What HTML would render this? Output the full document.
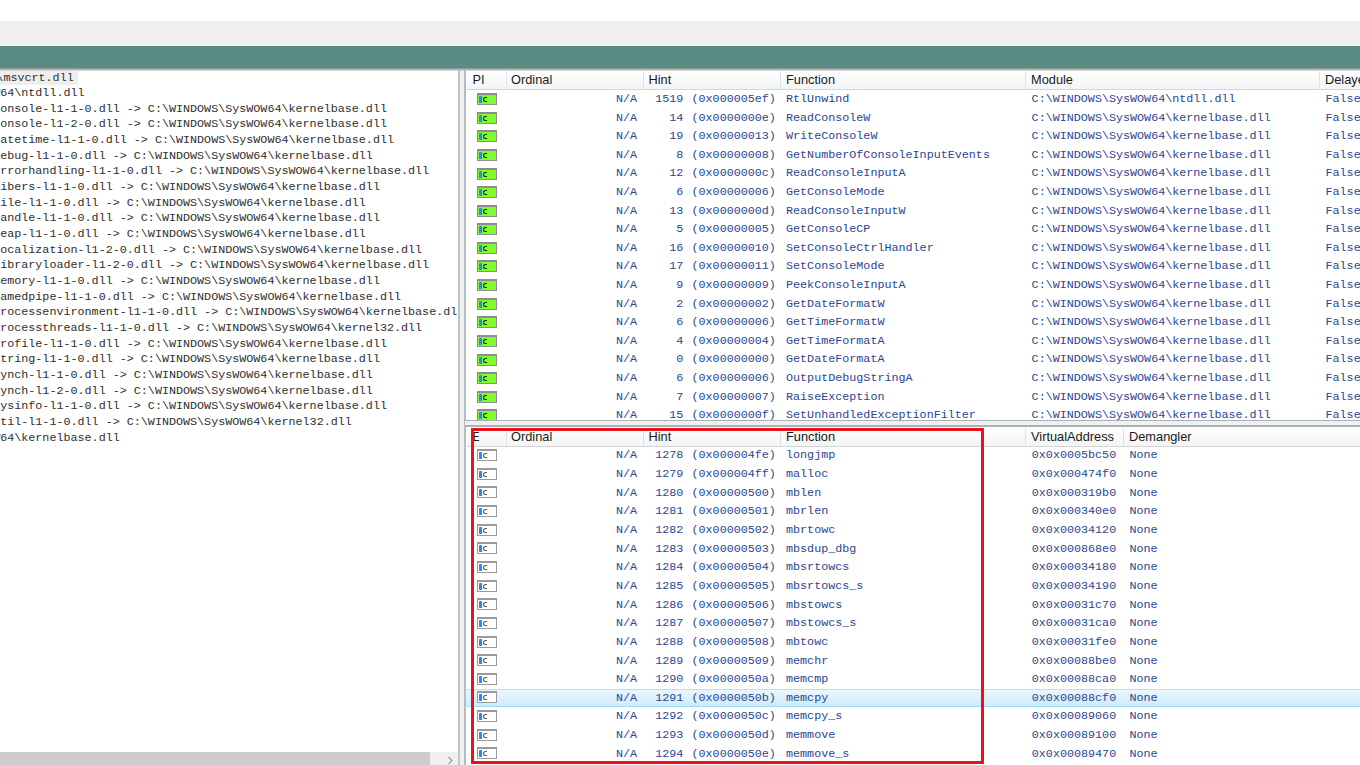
<!DOCTYPE html>
<html><head><meta charset="utf-8"><style>
html,body{margin:0;padding:0;width:1360px;height:765px;overflow:hidden;background:#fff;position:relative}
.a{position:absolute}
.m{font-family:"Liberation Mono",monospace;font-size:11.73px;white-space:pre;line-height:1;}
.s{font-family:"Liberation Sans",sans-serif;font-size:12.8px;white-space:pre;line-height:1;color:#1a1a1a}
.t{color:#2c4591}
.ic{position:absolute;width:20px;height:12px;background:#8d8a90}
.ic u{position:absolute;left:1px;top:2px;width:18px;height:9px;background:#80fb2c}
.ic.w{background:#9a9a9a}
.ic.w u{background:#fff}
.ic i{position:absolute;left:2px;top:3px;width:3px;height:7px;background:#2e86f6;border-radius:0.6px}
.ic b{position:absolute;left:6px;top:3.6px;width:3.4px;height:3.6px;border:1.25px solid #173300;border-right:none;border-radius:2.6px 0 0 2.6px}
.ic.w b{border-color:#5e5e5e}
.hd{position:absolute;height:19px;background:linear-gradient(#ffffff,#f3f4f5)}
.sep{position:absolute;width:1px;background:#dfe2e4}
</style></head><body>

<div class="a" style="left:0;top:21px;width:1360px;height:24px;background:#efefef"></div>
<div class="a" style="left:0;top:45px;width:1360px;height:1px;background:#f7f7f7"></div>
<div class="a" style="left:0;top:46px;width:1360px;height:22px;background:#5b8c84"></div>
<div class="a" style="left:0;top:70px;width:458px;height:695px;overflow:hidden;background:#fff">
<div class="a" style="left:0;top:1.3px;width:78px;height:14.2px;background:#eeeeee"></div>
<div class="a m" style="left:-137.26px;top:2.56px;color:#2e2e2e">C:\WINDOWS\SysWOW64\msvcrt.dll</div>
<div class="a m" style="left:-119.39px;top:17.84px;color:#2e2e2e">C:\WINDOWS\SysWOW64\ntdll.dll</div>
<div class="a m" style="left:-119.39px;top:33.52px;color:#2e2e2e">api-ms-win-core-console-l1-1-0.dll -&gt; C:\WINDOWS\SysWOW64\kernelbase.dll</div>
<div class="a m" style="left:-119.39px;top:49.20px;color:#2e2e2e">api-ms-win-core-console-l1-2-0.dll -&gt; C:\WINDOWS\SysWOW64\kernelbase.dll</div>
<div class="a m" style="left:-119.39px;top:64.88px;color:#2e2e2e">api-ms-win-core-datetime-l1-1-0.dll -&gt; C:\WINDOWS\SysWOW64\kernelbase.dll</div>
<div class="a m" style="left:-119.39px;top:80.56px;color:#2e2e2e">api-ms-win-core-debug-l1-1-0.dll -&gt; C:\WINDOWS\SysWOW64\kernelbase.dll</div>
<div class="a m" style="left:-119.39px;top:96.24px;color:#2e2e2e">api-ms-win-core-errorhandling-l1-1-0.dll -&gt; C:\WINDOWS\SysWOW64\kernelbase.dll</div>
<div class="a m" style="left:-119.39px;top:111.92px;color:#2e2e2e">api-ms-win-core-fibers-l1-1-0.dll -&gt; C:\WINDOWS\SysWOW64\kernelbase.dll</div>
<div class="a m" style="left:-119.39px;top:127.60px;color:#2e2e2e">api-ms-win-core-file-l1-1-0.dll -&gt; C:\WINDOWS\SysWOW64\kernelbase.dll</div>
<div class="a m" style="left:-119.39px;top:143.28px;color:#2e2e2e">api-ms-win-core-handle-l1-1-0.dll -&gt; C:\WINDOWS\SysWOW64\kernelbase.dll</div>
<div class="a m" style="left:-119.39px;top:158.96px;color:#2e2e2e">api-ms-win-core-heap-l1-1-0.dll -&gt; C:\WINDOWS\SysWOW64\kernelbase.dll</div>
<div class="a m" style="left:-119.39px;top:174.64px;color:#2e2e2e">api-ms-win-core-localization-l1-2-0.dll -&gt; C:\WINDOWS\SysWOW64\kernelbase.dll</div>
<div class="a m" style="left:-119.39px;top:190.32px;color:#2e2e2e">api-ms-win-core-libraryloader-l1-2-0.dll -&gt; C:\WINDOWS\SysWOW64\kernelbase.dll</div>
<div class="a m" style="left:-119.39px;top:206.00px;color:#2e2e2e">api-ms-win-core-memory-l1-1-0.dll -&gt; C:\WINDOWS\SysWOW64\kernelbase.dll</div>
<div class="a m" style="left:-119.39px;top:221.68px;color:#2e2e2e">api-ms-win-core-namedpipe-l1-1-0.dll -&gt; C:\WINDOWS\SysWOW64\kernelbase.dll</div>
<div class="a m" style="left:-119.39px;top:237.36px;color:#2e2e2e">api-ms-win-core-processenvironment-l1-1-0.dll -&gt; C:\WINDOWS\SysWOW64\kernelbase.dll</div>
<div class="a m" style="left:-119.39px;top:253.04px;color:#2e2e2e">api-ms-win-core-processthreads-l1-1-0.dll -&gt; C:\WINDOWS\SysWOW64\kernel32.dll</div>
<div class="a m" style="left:-119.39px;top:268.72px;color:#2e2e2e">api-ms-win-core-profile-l1-1-0.dll -&gt; C:\WINDOWS\SysWOW64\kernelbase.dll</div>
<div class="a m" style="left:-119.39px;top:284.40px;color:#2e2e2e">api-ms-win-core-string-l1-1-0.dll -&gt; C:\WINDOWS\SysWOW64\kernelbase.dll</div>
<div class="a m" style="left:-119.39px;top:300.08px;color:#2e2e2e">api-ms-win-core-synch-l1-1-0.dll -&gt; C:\WINDOWS\SysWOW64\kernelbase.dll</div>
<div class="a m" style="left:-119.39px;top:315.76px;color:#2e2e2e">api-ms-win-core-synch-l1-2-0.dll -&gt; C:\WINDOWS\SysWOW64\kernelbase.dll</div>
<div class="a m" style="left:-119.39px;top:331.44px;color:#2e2e2e">api-ms-win-core-sysinfo-l1-1-0.dll -&gt; C:\WINDOWS\SysWOW64\kernelbase.dll</div>
<div class="a m" style="left:-119.39px;top:347.12px;color:#2e2e2e">api-ms-win-core-util-l1-1-0.dll -&gt; C:\WINDOWS\SysWOW64\kernel32.dll</div>
<div class="a m" style="left:-119.39px;top:362.80px;color:#2e2e2e">C:\WINDOWS\SysWOW64\kernelbase.dll</div>
<div class="a" style="left:0;top:682px;width:458px;height:13px;background:#f0f0f0"></div>
<div class="a" style="left:0;top:682px;width:430px;height:13px;background:#cdcdcd"></div>
<svg class="a" style="left:446px;top:686px" width="9" height="9" viewBox="0 0 9 9"><path d="M2.5 1 L6 4.5 L2.5 8" fill="none" stroke="#a0a0a0" stroke-width="1.3"/></svg>
</div>
<div class="a" style="left:458px;top:70px;width:2px;height:695px;background:#bcc6c8"></div>
<div class="a" style="left:460px;top:70px;width:4px;height:695px;background:#f0f0f0"></div>
<div class="a" style="left:464px;top:70px;width:1.7px;height:695px;background:#b2bec1"></div>
<div class="a" style="left:465.5px;top:70px;width:895px;height:350px;overflow:hidden;background:#fff">
</div>
<div class="hd" style="left:467px;top:70.5px;width:893px"></div>
<div class="a" style="left:467px;top:89px;width:893px;height:1px;background:#d5d5d5"></div>
<div class="sep" style="left:506px;top:71px;height:18px"></div>
<div class="sep" style="left:643px;top:71px;height:18px"></div>
<div class="sep" style="left:780px;top:71px;height:18px"></div>
<div class="sep" style="left:1025px;top:71px;height:18px"></div>
<div class="sep" style="left:1319px;top:71px;height:18px"></div>
<div class="a s" style="left:472.5px;top:74px">PI</div>
<div class="a s" style="left:511px;top:74px">Ordinal</div>
<div class="a s" style="left:648.5px;top:74px">Hint</div>
<div class="a s" style="left:786px;top:74px">Function</div>
<div class="a s" style="left:1031px;top:74px">Module</div>
<div class="a s" style="left:1325px;top:74px">Delayed</div>
<div class="ic" style="left:477px;top:93.00px"><u></u><i></i><b></b></div>
<div class="a m t" style="left:616.00px;top:93.96px">N/A</div>
<div class="a m t" style="left:655.26px;top:93.96px">1519</div>
<div class="a m t" style="left:691.50px;top:93.96px">(0x000005ef)</div>
<div class="a m t" style="left:786.00px;top:93.96px">RtlUnwind</div>
<div class="a m t" style="left:1031.60px;top:93.96px">C:\WINDOWS\SysWOW64\ntdll.dll</div>
<div class="a m t" style="left:1325.50px;top:93.96px">False</div>
<div class="ic" style="left:477px;top:112.00px"><u></u><i></i><b></b></div>
<div class="a m t" style="left:616.00px;top:112.56px">N/A</div>
<div class="a m t" style="left:669.33px;top:112.56px">14</div>
<div class="a m t" style="left:691.50px;top:112.56px">(0x0000000e)</div>
<div class="a m t" style="left:786.00px;top:112.56px">ReadConsoleW</div>
<div class="a m t" style="left:1031.60px;top:112.56px">C:\WINDOWS\SysWOW64\kernelbase.dll</div>
<div class="a m t" style="left:1325.50px;top:112.56px">False</div>
<div class="ic" style="left:477px;top:130.00px"><u></u><i></i><b></b></div>
<div class="a m t" style="left:616.00px;top:131.16px">N/A</div>
<div class="a m t" style="left:669.33px;top:131.16px">19</div>
<div class="a m t" style="left:691.50px;top:131.16px">(0x00000013)</div>
<div class="a m t" style="left:786.00px;top:131.16px">WriteConsoleW</div>
<div class="a m t" style="left:1031.60px;top:131.16px">C:\WINDOWS\SysWOW64\kernelbase.dll</div>
<div class="a m t" style="left:1325.50px;top:131.16px">False</div>
<div class="ic" style="left:477px;top:149.00px"><u></u><i></i><b></b></div>
<div class="a m t" style="left:616.00px;top:149.76px">N/A</div>
<div class="a m t" style="left:676.37px;top:149.76px">8</div>
<div class="a m t" style="left:691.50px;top:149.76px">(0x00000008)</div>
<div class="a m t" style="left:786.00px;top:149.76px">GetNumberOfConsoleInputEvents</div>
<div class="a m t" style="left:1031.60px;top:149.76px">C:\WINDOWS\SysWOW64\kernelbase.dll</div>
<div class="a m t" style="left:1325.50px;top:149.76px">False</div>
<div class="ic" style="left:477px;top:168.00px"><u></u><i></i><b></b></div>
<div class="a m t" style="left:616.00px;top:168.36px">N/A</div>
<div class="a m t" style="left:669.33px;top:168.36px">12</div>
<div class="a m t" style="left:691.50px;top:168.36px">(0x0000000c)</div>
<div class="a m t" style="left:786.00px;top:168.36px">ReadConsoleInputA</div>
<div class="a m t" style="left:1031.60px;top:168.36px">C:\WINDOWS\SysWOW64\kernelbase.dll</div>
<div class="a m t" style="left:1325.50px;top:168.36px">False</div>
<div class="ic" style="left:477px;top:186.00px"><u></u><i></i><b></b></div>
<div class="a m t" style="left:616.00px;top:186.96px">N/A</div>
<div class="a m t" style="left:676.37px;top:186.96px">6</div>
<div class="a m t" style="left:691.50px;top:186.96px">(0x00000006)</div>
<div class="a m t" style="left:786.00px;top:186.96px">GetConsoleMode</div>
<div class="a m t" style="left:1031.60px;top:186.96px">C:\WINDOWS\SysWOW64\kernelbase.dll</div>
<div class="a m t" style="left:1325.50px;top:186.96px">False</div>
<div class="ic" style="left:477px;top:205.00px"><u></u><i></i><b></b></div>
<div class="a m t" style="left:616.00px;top:205.56px">N/A</div>
<div class="a m t" style="left:669.33px;top:205.56px">13</div>
<div class="a m t" style="left:691.50px;top:205.56px">(0x0000000d)</div>
<div class="a m t" style="left:786.00px;top:205.56px">ReadConsoleInputW</div>
<div class="a m t" style="left:1031.60px;top:205.56px">C:\WINDOWS\SysWOW64\kernelbase.dll</div>
<div class="a m t" style="left:1325.50px;top:205.56px">False</div>
<div class="ic" style="left:477px;top:223.00px"><u></u><i></i><b></b></div>
<div class="a m t" style="left:616.00px;top:224.16px">N/A</div>
<div class="a m t" style="left:676.37px;top:224.16px">5</div>
<div class="a m t" style="left:691.50px;top:224.16px">(0x00000005)</div>
<div class="a m t" style="left:786.00px;top:224.16px">GetConsoleCP</div>
<div class="a m t" style="left:1031.60px;top:224.16px">C:\WINDOWS\SysWOW64\kernelbase.dll</div>
<div class="a m t" style="left:1325.50px;top:224.16px">False</div>
<div class="ic" style="left:477px;top:242.00px"><u></u><i></i><b></b></div>
<div class="a m t" style="left:616.00px;top:242.76px">N/A</div>
<div class="a m t" style="left:669.33px;top:242.76px">16</div>
<div class="a m t" style="left:691.50px;top:242.76px">(0x00000010)</div>
<div class="a m t" style="left:786.00px;top:242.76px">SetConsoleCtrlHandler</div>
<div class="a m t" style="left:1031.60px;top:242.76px">C:\WINDOWS\SysWOW64\kernelbase.dll</div>
<div class="a m t" style="left:1325.50px;top:242.76px">False</div>
<div class="ic" style="left:477px;top:260.00px"><u></u><i></i><b></b></div>
<div class="a m t" style="left:616.00px;top:261.36px">N/A</div>
<div class="a m t" style="left:669.33px;top:261.36px">17</div>
<div class="a m t" style="left:691.50px;top:261.36px">(0x00000011)</div>
<div class="a m t" style="left:786.00px;top:261.36px">SetConsoleMode</div>
<div class="a m t" style="left:1031.60px;top:261.36px">C:\WINDOWS\SysWOW64\kernelbase.dll</div>
<div class="a m t" style="left:1325.50px;top:261.36px">False</div>
<div class="ic" style="left:477px;top:279.00px"><u></u><i></i><b></b></div>
<div class="a m t" style="left:616.00px;top:279.96px">N/A</div>
<div class="a m t" style="left:676.37px;top:279.96px">9</div>
<div class="a m t" style="left:691.50px;top:279.96px">(0x00000009)</div>
<div class="a m t" style="left:786.00px;top:279.96px">PeekConsoleInputA</div>
<div class="a m t" style="left:1031.60px;top:279.96px">C:\WINDOWS\SysWOW64\kernelbase.dll</div>
<div class="a m t" style="left:1325.50px;top:279.96px">False</div>
<div class="ic" style="left:477px;top:298.00px"><u></u><i></i><b></b></div>
<div class="a m t" style="left:616.00px;top:298.56px">N/A</div>
<div class="a m t" style="left:676.37px;top:298.56px">2</div>
<div class="a m t" style="left:691.50px;top:298.56px">(0x00000002)</div>
<div class="a m t" style="left:786.00px;top:298.56px">GetDateFormatW</div>
<div class="a m t" style="left:1031.60px;top:298.56px">C:\WINDOWS\SysWOW64\kernelbase.dll</div>
<div class="a m t" style="left:1325.50px;top:298.56px">False</div>
<div class="ic" style="left:477px;top:316.00px"><u></u><i></i><b></b></div>
<div class="a m t" style="left:616.00px;top:317.16px">N/A</div>
<div class="a m t" style="left:676.37px;top:317.16px">6</div>
<div class="a m t" style="left:691.50px;top:317.16px">(0x00000006)</div>
<div class="a m t" style="left:786.00px;top:317.16px">GetTimeFormatW</div>
<div class="a m t" style="left:1031.60px;top:317.16px">C:\WINDOWS\SysWOW64\kernelbase.dll</div>
<div class="a m t" style="left:1325.50px;top:317.16px">False</div>
<div class="ic" style="left:477px;top:335.00px"><u></u><i></i><b></b></div>
<div class="a m t" style="left:616.00px;top:335.76px">N/A</div>
<div class="a m t" style="left:676.37px;top:335.76px">4</div>
<div class="a m t" style="left:691.50px;top:335.76px">(0x00000004)</div>
<div class="a m t" style="left:786.00px;top:335.76px">GetTimeFormatA</div>
<div class="a m t" style="left:1031.60px;top:335.76px">C:\WINDOWS\SysWOW64\kernelbase.dll</div>
<div class="a m t" style="left:1325.50px;top:335.76px">False</div>
<div class="ic" style="left:477px;top:354.00px"><u></u><i></i><b></b></div>
<div class="a m t" style="left:616.00px;top:354.36px">N/A</div>
<div class="a m t" style="left:676.37px;top:354.36px">0</div>
<div class="a m t" style="left:691.50px;top:354.36px">(0x00000000)</div>
<div class="a m t" style="left:786.00px;top:354.36px">GetDateFormatA</div>
<div class="a m t" style="left:1031.60px;top:354.36px">C:\WINDOWS\SysWOW64\kernelbase.dll</div>
<div class="a m t" style="left:1325.50px;top:354.36px">False</div>
<div class="ic" style="left:477px;top:372.00px"><u></u><i></i><b></b></div>
<div class="a m t" style="left:616.00px;top:372.96px">N/A</div>
<div class="a m t" style="left:676.37px;top:372.96px">6</div>
<div class="a m t" style="left:691.50px;top:372.96px">(0x00000006)</div>
<div class="a m t" style="left:786.00px;top:372.96px">OutputDebugStringA</div>
<div class="a m t" style="left:1031.60px;top:372.96px">C:\WINDOWS\SysWOW64\kernelbase.dll</div>
<div class="a m t" style="left:1325.50px;top:372.96px">False</div>
<div class="ic" style="left:477px;top:391.00px"><u></u><i></i><b></b></div>
<div class="a m t" style="left:616.00px;top:391.56px">N/A</div>
<div class="a m t" style="left:676.37px;top:391.56px">7</div>
<div class="a m t" style="left:691.50px;top:391.56px">(0x00000007)</div>
<div class="a m t" style="left:786.00px;top:391.56px">RaiseException</div>
<div class="a m t" style="left:1031.60px;top:391.56px">C:\WINDOWS\SysWOW64\kernelbase.dll</div>
<div class="a m t" style="left:1325.50px;top:391.56px">False</div>
<div class="ic" style="left:477px;top:409.00px"><u></u><i></i><b></b></div>
<div class="a m t" style="left:616.00px;top:410.16px">N/A</div>
<div class="a m t" style="left:669.33px;top:410.16px">15</div>
<div class="a m t" style="left:691.50px;top:410.16px">(0x0000000f)</div>
<div class="a m t" style="left:786.00px;top:410.16px">SetUnhandledExceptionFilter</div>
<div class="a m t" style="left:1031.60px;top:410.16px">C:\WINDOWS\SysWOW64\kernelbase.dll</div>
<div class="a m t" style="left:1325.50px;top:410.16px">False</div>
<div class="a" style="left:465px;top:419.8px;width:895px;height:1.5px;background:#a7b4b7"></div>
<div class="a" style="left:465px;top:421.3px;width:895px;height:4px;background:#f0f0f0"></div>
<div class="a" style="left:465px;top:425.3px;width:895px;height:1.6px;background:#a7b4b7"></div>
<div class="hd" style="left:467px;top:427px;width:893px"></div>
<div class="a" style="left:467px;top:446px;width:893px;height:1px;background:#d5d5d5"></div>
<div class="sep" style="left:506px;top:428px;height:18px"></div>
<div class="sep" style="left:643px;top:428px;height:18px"></div>
<div class="sep" style="left:780px;top:428px;height:18px"></div>
<div class="sep" style="left:1025px;top:428px;height:18px"></div>
<div class="sep" style="left:1123px;top:428px;height:18px"></div>
<div class="a s" style="left:472.5px;top:431px;transform:scaleX(0.75);transform-origin:0 0">E</div>
<div class="a s" style="left:511px;top:431px">Ordinal</div>
<div class="a s" style="left:648.5px;top:431px">Hint</div>
<div class="a s" style="left:786px;top:431px">Function</div>
<div class="a s" style="left:1031px;top:431px">VirtualAddress</div>
<div class="a s" style="left:1129px;top:431px">Demangler</div>
<div class="a" style="left:465.5px;top:688.52px;width:900px;height:16px;border-top:1px solid #b4e0f6;border-bottom:1px solid #a3d8f4;background:linear-gradient(#eaf7fe,#cdebfb);border-radius:2px"></div>
<div class="ic w" style="left:477px;top:449.00px"><u></u><i></i><b></b></div>
<div class="a m t" style="left:616.00px;top:450.46px">N/A</div>
<div class="a m t" style="left:655.26px;top:450.46px">1278</div>
<div class="a m t" style="left:691.50px;top:450.46px">(0x000004fe)</div>
<div class="a m t" style="left:786.00px;top:450.46px">longjmp</div>
<div class="a m t" style="left:1031.80px;top:450.46px">0x0x0005bc50</div>
<div class="a m t" style="left:1129.50px;top:450.46px">None</div>
<div class="ic w" style="left:477px;top:468.00px"><u></u><i></i><b></b></div>
<div class="a m t" style="left:616.00px;top:469.10px">N/A</div>
<div class="a m t" style="left:655.26px;top:469.10px">1279</div>
<div class="a m t" style="left:691.50px;top:469.10px">(0x000004ff)</div>
<div class="a m t" style="left:786.00px;top:469.10px">malloc</div>
<div class="a m t" style="left:1031.80px;top:469.10px">0x0x000474f0</div>
<div class="a m t" style="left:1129.50px;top:469.10px">None</div>
<div class="ic w" style="left:477px;top:486.00px"><u></u><i></i><b></b></div>
<div class="a m t" style="left:616.00px;top:487.74px">N/A</div>
<div class="a m t" style="left:655.26px;top:487.74px">1280</div>
<div class="a m t" style="left:691.50px;top:487.74px">(0x00000500)</div>
<div class="a m t" style="left:786.00px;top:487.74px">mblen</div>
<div class="a m t" style="left:1031.80px;top:487.74px">0x0x000319b0</div>
<div class="a m t" style="left:1129.50px;top:487.74px">None</div>
<div class="ic w" style="left:477px;top:505.00px"><u></u><i></i><b></b></div>
<div class="a m t" style="left:616.00px;top:506.38px">N/A</div>
<div class="a m t" style="left:655.26px;top:506.38px">1281</div>
<div class="a m t" style="left:691.50px;top:506.38px">(0x00000501)</div>
<div class="a m t" style="left:786.00px;top:506.38px">mbrlen</div>
<div class="a m t" style="left:1031.80px;top:506.38px">0x0x000340e0</div>
<div class="a m t" style="left:1129.50px;top:506.38px">None</div>
<div class="ic w" style="left:477px;top:524.00px"><u></u><i></i><b></b></div>
<div class="a m t" style="left:616.00px;top:525.02px">N/A</div>
<div class="a m t" style="left:655.26px;top:525.02px">1282</div>
<div class="a m t" style="left:691.50px;top:525.02px">(0x00000502)</div>
<div class="a m t" style="left:786.00px;top:525.02px">mbrtowc</div>
<div class="a m t" style="left:1031.80px;top:525.02px">0x0x00034120</div>
<div class="a m t" style="left:1129.50px;top:525.02px">None</div>
<div class="ic w" style="left:477px;top:542.00px"><u></u><i></i><b></b></div>
<div class="a m t" style="left:616.00px;top:543.66px">N/A</div>
<div class="a m t" style="left:655.26px;top:543.66px">1283</div>
<div class="a m t" style="left:691.50px;top:543.66px">(0x00000503)</div>
<div class="a m t" style="left:786.00px;top:543.66px">mbsdup_dbg</div>
<div class="a m t" style="left:1031.80px;top:543.66px">0x0x000868e0</div>
<div class="a m t" style="left:1129.50px;top:543.66px">None</div>
<div class="ic w" style="left:477px;top:561.00px"><u></u><i></i><b></b></div>
<div class="a m t" style="left:616.00px;top:562.30px">N/A</div>
<div class="a m t" style="left:655.26px;top:562.30px">1284</div>
<div class="a m t" style="left:691.50px;top:562.30px">(0x00000504)</div>
<div class="a m t" style="left:786.00px;top:562.30px">mbsrtowcs</div>
<div class="a m t" style="left:1031.80px;top:562.30px">0x0x00034180</div>
<div class="a m t" style="left:1129.50px;top:562.30px">None</div>
<div class="ic w" style="left:477px;top:580.00px"><u></u><i></i><b></b></div>
<div class="a m t" style="left:616.00px;top:580.94px">N/A</div>
<div class="a m t" style="left:655.26px;top:580.94px">1285</div>
<div class="a m t" style="left:691.50px;top:580.94px">(0x00000505)</div>
<div class="a m t" style="left:786.00px;top:580.94px">mbsrtowcs_s</div>
<div class="a m t" style="left:1031.80px;top:580.94px">0x0x00034190</div>
<div class="a m t" style="left:1129.50px;top:580.94px">None</div>
<div class="ic w" style="left:477px;top:598.00px"><u></u><i></i><b></b></div>
<div class="a m t" style="left:616.00px;top:599.58px">N/A</div>
<div class="a m t" style="left:655.26px;top:599.58px">1286</div>
<div class="a m t" style="left:691.50px;top:599.58px">(0x00000506)</div>
<div class="a m t" style="left:786.00px;top:599.58px">mbstowcs</div>
<div class="a m t" style="left:1031.80px;top:599.58px">0x0x00031c70</div>
<div class="a m t" style="left:1129.50px;top:599.58px">None</div>
<div class="ic w" style="left:477px;top:617.00px"><u></u><i></i><b></b></div>
<div class="a m t" style="left:616.00px;top:618.22px">N/A</div>
<div class="a m t" style="left:655.26px;top:618.22px">1287</div>
<div class="a m t" style="left:691.50px;top:618.22px">(0x00000507)</div>
<div class="a m t" style="left:786.00px;top:618.22px">mbstowcs_s</div>
<div class="a m t" style="left:1031.80px;top:618.22px">0x0x00031ca0</div>
<div class="a m t" style="left:1129.50px;top:618.22px">None</div>
<div class="ic w" style="left:477px;top:636.00px"><u></u><i></i><b></b></div>
<div class="a m t" style="left:616.00px;top:636.86px">N/A</div>
<div class="a m t" style="left:655.26px;top:636.86px">1288</div>
<div class="a m t" style="left:691.50px;top:636.86px">(0x00000508)</div>
<div class="a m t" style="left:786.00px;top:636.86px">mbtowc</div>
<div class="a m t" style="left:1031.80px;top:636.86px">0x0x00031fe0</div>
<div class="a m t" style="left:1129.50px;top:636.86px">None</div>
<div class="ic w" style="left:477px;top:654.00px"><u></u><i></i><b></b></div>
<div class="a m t" style="left:616.00px;top:655.50px">N/A</div>
<div class="a m t" style="left:655.26px;top:655.50px">1289</div>
<div class="a m t" style="left:691.50px;top:655.50px">(0x00000509)</div>
<div class="a m t" style="left:786.00px;top:655.50px">memchr</div>
<div class="a m t" style="left:1031.80px;top:655.50px">0x0x00088be0</div>
<div class="a m t" style="left:1129.50px;top:655.50px">None</div>
<div class="ic w" style="left:477px;top:673.00px"><u></u><i></i><b></b></div>
<div class="a m t" style="left:616.00px;top:674.14px">N/A</div>
<div class="a m t" style="left:655.26px;top:674.14px">1290</div>
<div class="a m t" style="left:691.50px;top:674.14px">(0x0000050a)</div>
<div class="a m t" style="left:786.00px;top:674.14px">memcmp</div>
<div class="a m t" style="left:1031.80px;top:674.14px">0x0x00088ca0</div>
<div class="a m t" style="left:1129.50px;top:674.14px">None</div>
<div class="ic w" style="left:477px;top:691.00px"><u></u><i></i><b></b></div>
<div class="a m t" style="left:616.00px;top:692.78px">N/A</div>
<div class="a m t" style="left:655.26px;top:692.78px">1291</div>
<div class="a m t" style="left:691.50px;top:692.78px">(0x0000050b)</div>
<div class="a m t" style="left:786.00px;top:692.78px">memcpy</div>
<div class="a m t" style="left:1031.80px;top:692.78px">0x0x00088cf0</div>
<div class="a m t" style="left:1129.50px;top:692.78px">None</div>
<div class="ic w" style="left:477px;top:710.00px"><u></u><i></i><b></b></div>
<div class="a m t" style="left:616.00px;top:711.42px">N/A</div>
<div class="a m t" style="left:655.26px;top:711.42px">1292</div>
<div class="a m t" style="left:691.50px;top:711.42px">(0x0000050c)</div>
<div class="a m t" style="left:786.00px;top:711.42px">memcpy_s</div>
<div class="a m t" style="left:1031.80px;top:711.42px">0x0x00089060</div>
<div class="a m t" style="left:1129.50px;top:711.42px">None</div>
<div class="ic w" style="left:477px;top:729.00px"><u></u><i></i><b></b></div>
<div class="a m t" style="left:616.00px;top:730.06px">N/A</div>
<div class="a m t" style="left:655.26px;top:730.06px">1293</div>
<div class="a m t" style="left:691.50px;top:730.06px">(0x0000050d)</div>
<div class="a m t" style="left:786.00px;top:730.06px">memmove</div>
<div class="a m t" style="left:1031.80px;top:730.06px">0x0x00089100</div>
<div class="a m t" style="left:1129.50px;top:730.06px">None</div>
<div class="ic w" style="left:477px;top:747.00px"><u></u><i></i><b></b></div>
<div class="a m t" style="left:616.00px;top:748.70px">N/A</div>
<div class="a m t" style="left:655.26px;top:748.70px">1294</div>
<div class="a m t" style="left:691.50px;top:748.70px">(0x0000050e)</div>
<div class="a m t" style="left:786.00px;top:748.70px">memmove_s</div>
<div class="a m t" style="left:1031.80px;top:748.70px">0x0x00089470</div>
<div class="a m t" style="left:1129.50px;top:748.70px">None</div>
<div class="a" style="left:0;top:68px;width:1360px;height:3px;background:linear-gradient(#7f8786,rgba(210,214,214,0.6))"></div>
<div class="a" style="left:471px;top:428px;width:507px;height:330px;border:3px solid #ea111b"></div>
</body></html>
